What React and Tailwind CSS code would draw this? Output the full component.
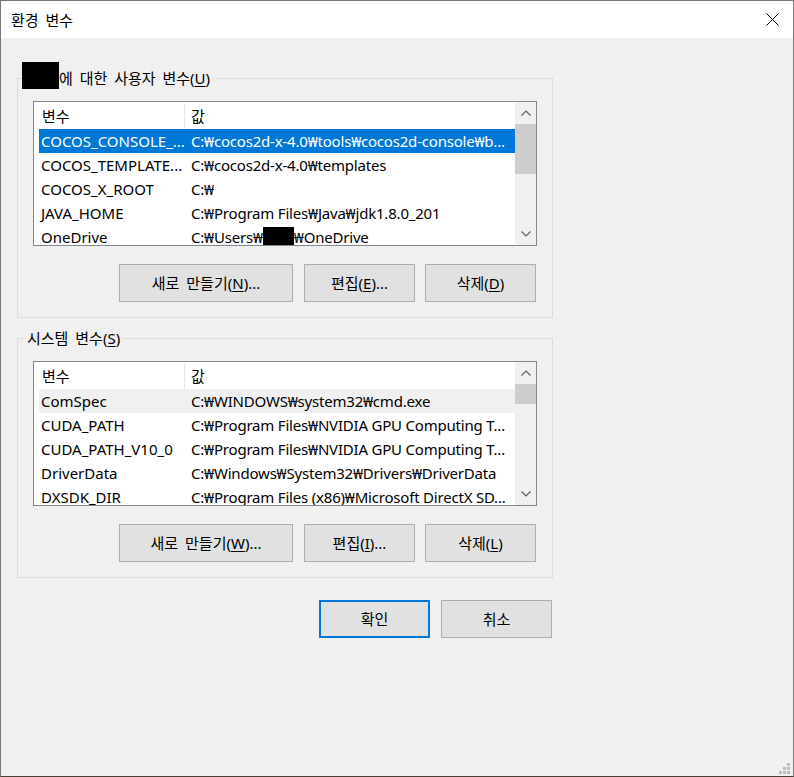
const font = "font-['Noto_Sans','Noto_Sans_CJK_KR',sans-serif]";

const userVars = [
  { name: "COCOS_CONSOLE_...", value: "C:₩cocos2d-x-4.0₩tools₩cocos2d-console₩b...", sel: "blue" },
  { name: "COCOS_TEMPLATE...", value: "C:₩cocos2d-x-4.0₩templates" },
  { name: "COCOS_X_ROOT", value: "C:₩" },
  { name: "JAVA_HOME", value: "C:₩Program Files₩Java₩jdk1.8.0_201" },
  { name: "OneDrive", value: "onedrive" },
];

const sysVars = [
  { name: "ComSpec", value: "C:₩WINDOWS₩system32₩cmd.exe", sel: "gray" },
  { name: "CUDA_PATH", value: "C:₩Program Files₩NVIDIA GPU Computing T..." },
  { name: "CUDA_PATH_V10_0", value: "C:₩Program Files₩NVIDIA GPU Computing T..." },
  { name: "DriverData", value: "C:₩Windows₩System32₩Drivers₩DriverData" },
  { name: "DXSDK_DIR", value: "C:₩Program Files (x86)₩Microsoft DirectX SD..." },
];

const Chevron = ({ down }) => (
  <svg width="10" height="6" viewBox="0 0 10 6" fill="none">
    <path d={down ? "M0.5 0.5L5 5L9.5 0.5" : "M0.5 5.5L5 1L9.5 5.5"} stroke="#606060" strokeWidth="1.2" />
  </svg>
);

const Scrollbar = ({ thumb }) => (
  <div className="w-[21px] shrink-0 bg-[#f0f0f0] flex flex-col">
    <div className="h-[22px] flex items-center justify-center">
      <Chevron />
    </div>
    <div className={`${thumb} bg-[#cdcdcd]`} />
    <div className="flex-1" />
    <div className="h-[23px] flex items-center justify-center">
      <Chevron down />
    </div>
  </div>
);

const rowClass = (sel) =>
  sel === "blue" ? "bg-[#0078d7] text-white" : sel === "gray" ? "bg-[#f0f0f0] text-black" : "text-black";

const VarList = ({ rows, thumb }) => (
  <div className="mt-[13px] h-[145px] border border-[#828790] bg-white flex overflow-hidden">
    <div className="flex-1 min-w-0 pl-[5px] overflow-hidden">
      <div className="flex h-[27px] items-center pt-[1px]">
        <div className="w-[146px] h-[25px] flex items-center pl-[3px] border-r border-[#e5e5e5]">변수</div>
        <div className="pl-[6px]">값</div>
      </div>
      {rows.map((r) => (
        <div key={r.name} className={`flex h-[24px] items-center ${rowClass(r.sel)}`}>
          <div className="w-[150px] shrink-0 pl-[2px] whitespace-nowrap overflow-hidden">{r.name}</div>
          <div className="pl-[2px] whitespace-nowrap overflow-hidden tracking-[-0.2px]">
            {r.value === "onedrive" ? (
              <>
                C:₩Users₩<span className="inline-block w-[31px] h-[22px] bg-black align-middle -mt-[4px]" />₩OneDrive
              </>
            ) : (
              r.value
            )}
          </div>
        </div>
      ))}
    </div>
    <Scrollbar thumb={thumb} />
  </div>
);

const Btn = ({ children, className = "", border = "border border-[#adadad]" }) => (
  <button
    className={`h-[38px] bg-[#e1e1e1] text-black flex items-center justify-center [word-spacing:3px] ${border} ${className}`}
  >
    {children}
  </button>
);

const U = ({ children }) => <span className="underline underline-offset-2">{children}</span>;

const Group = ({ legend, legendClass, rows, thumb, keys }) => (
  <fieldset className="border border-[#dcdcdc] px-[15px] pb-[15px]">
    <legend className={`h-[20px] flex items-center pr-[2px] [word-spacing:3px] ${legendClass}`}>{legend}</legend>
    <VarList rows={rows} thumb={thumb} />
    <div className="flex justify-end mt-[18px]">
      <Btn className="w-[174px] mr-[11px]">
        새로 만들기(<U>{keys[0]}</U>)...
      </Btn>
      <Btn className="w-[111px] mr-[10px]">
        편집(<U>{keys[1]}</U>)...
      </Btn>
      <Btn className="w-[111px] mr-[1px]">
        삭제(<U>{keys[2]}</U>)
      </Btn>
    </div>
  </fieldset>
);

export default function App() {
  return (
    <div
      className={`${font} text-[15px] leading-[20px] text-black w-[794px] h-[777px] relative flex flex-col bg-[#f0f0f0] border-x border-t border-[#777777] border-b border-b-[#4b4035]`}
    >
      {/* title bar */}
      <div className="h-[37px] bg-white flex items-center justify-between pl-[10px] pr-[14px] shrink-0">
        <span className="text-[15px] [word-spacing:3px]">환경 변수</span>
        <svg width="13" height="13" viewBox="0 0 13 13" fill="none">
          <path d="M0.5 0.5L12.5 12.5M12.5 0.5L0.5 12.5" stroke="#000" strokeWidth="1" />
        </svg>
      </div>

      <div className="pt-[30px] pl-[16px] w-[552px]">
        <Group
          legend={
            <>
              <span className="inline-block w-[37px] h-[27px] bg-black -translate-y-[3px]" />
              에 대한 사용자 변수(<U>U</U>)
            </>
          }
          legendClass="-ml-[11px]"
          rows={userVars}
          thumb="h-[50px]"
          keys={["N", "E", "D"]}
        />
        <div className="mt-[10px]">
          <Group
            legend={
              <>
                시스템 변수(<U>S</U>)
              </>
            }
            legendClass="-ml-[8px] pl-[2px]"
            rows={sysVars}
            thumb="h-[20px]"
            keys={["W", "I", "L"]}
          />
        </div>
        <div className="flex justify-end mt-[22px] gap-[11px]">
          <Btn className="w-[111px]" border="border-2 border-[#0078d7]">
            확인
          </Btn>
          <Btn className="w-[111px] mr-[1px]">취소</Btn>
        </div>
      </div>

      {/* resize grip */}
      <svg className="absolute right-[3px] bottom-[2px]" width="11" height="11" viewBox="0 0 11 11">
        <rect x="8" y="0" width="3" height="3" fill="#bcbcbc" />
        <rect x="4" y="4" width="3" height="3" fill="#bcbcbc" />
        <rect x="8" y="4" width="3" height="3" fill="#bcbcbc" />
        <rect x="0" y="8" width="3" height="3" fill="#bcbcbc" />
        <rect x="4" y="8" width="3" height="3" fill="#bcbcbc" />
        <rect x="8" y="8" width="3" height="3" fill="#bcbcbc" />
      </svg>
    </div>
  );
}
